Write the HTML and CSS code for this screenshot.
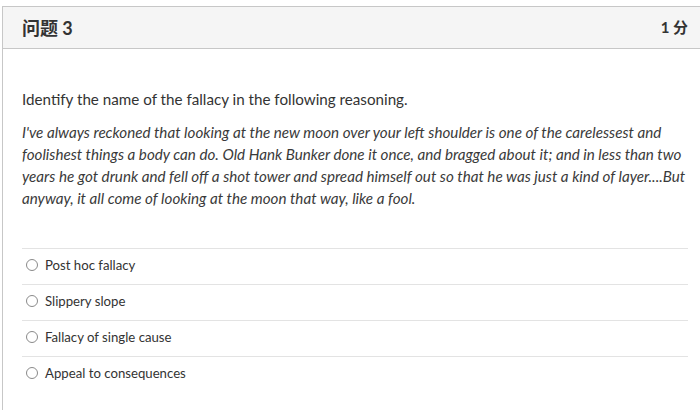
FILE: index.html
```html
<!DOCTYPE html>
<html lang="zh">
<head>
<meta charset="utf-8">
<link rel="stylesheet" href="styles.css">
</head>
<body>
<div class="card">
  <div class="header">
    <span class="title">问题 3</span>
    <span class="points">1 分</span>
  </div>
  <div class="body">
    <p class="prompt">Identify the name of the fallacy in the following reasoning.</p>
    <p class="quote">I've always reckoned that looking at the new moon over your left shoulder is one of the carelessest and foolishest things a body can do. Old Hank Bunker done it once, and bragged about it; and in less than two years he got drunk and fell off a shot tower and spread himself out so that he was just a kind of layer....But anyway, it all come of looking at the moon that way, like a fool.</p>
    <div class="answers">
      <label class="answer"><span class="radio"></span><span class="label">Post hoc fallacy</span></label>
      <label class="answer"><span class="radio"></span><span class="label">Slippery slope</span></label>
      <label class="answer"><span class="radio"></span><span class="label">Fallacy of single cause</span></label>
      <label class="answer"><span class="radio"></span><span class="label">Appeal to consequences</span></label>
    </div>
  </div>
</div>
</body>
</html>
```
FILE: styles.css
```css
html, body {
  margin: 0;
  padding: 0;
  background: #fff;
  overflow: hidden;
}
body {
  font-family: Lato, "Noto Sans CJK SC", sans-serif;
  color: #333;
}
.card {
  margin: 6px 0 0 2px;
  width: 698px;
  height: 410px;
  box-sizing: border-box;
  border-top: 1px solid #c7c7c7;
  border-left: 1px solid #c7c7c7;
}
.header {
  display: flex;
  justify-content: space-between;
  align-items: center;
  box-sizing: border-box;
  height: 42px;
  padding: 0 12px 2px 19px;
  background: #f5f5f5;
  border-bottom: 1px solid #c7c7c7;
}
.title {
  font-weight: bold;
  font-size: 18px;
  color: #333;
}
.points {
  font-weight: bold;
  font-size: 15px;
  color: #333;
}
.body {
  padding: 39px 12px 0 19px;
}
.prompt {
  margin: 0 0 11px;
  font-size: 15.2px;
  line-height: 22px;
}
.quote {
  margin: 0;
  font-style: italic;
  font-size: 15.2px;
  line-height: 22px;
  color: #3a3a3a;
}
.answers {
  margin-top: 39px;
}
.answer {
  display: flex;
  align-items: center;
  height: 32px;
  padding: 0 0 3px 4px;
  border-top: 1px solid #e3e3e3;
}
.radio {
  width: 12px;
  height: 12px;
  box-sizing: border-box;
  border: 1px solid #8a8a8a;
  border-radius: 50%;
  background: #fff;
  margin-right: 7px;
}
.label {
  font-size: 13.2px;
}
```
